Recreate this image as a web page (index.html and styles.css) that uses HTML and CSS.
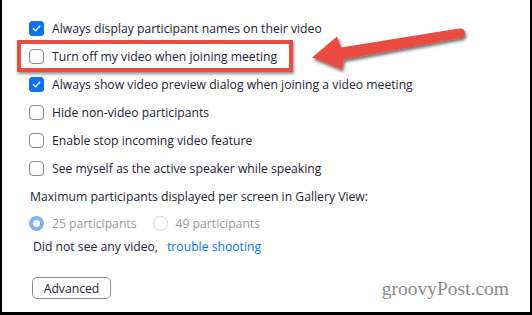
FILE: index.html
```html
<!DOCTYPE html>
<html>
<head>
<meta charset="utf-8">
<link rel="stylesheet" href="styles.css">
</head>
<body>
<div class="frame">
  <div class="panel">
    <div class="row"><span class="cb checked"><svg viewBox="0 0 15 15"><path d="M3.8 7.6 L6.4 10.1 L11.2 4.9" /></svg></span><span>Always display participant names on their video</span></div>
    <div class="row"><span class="cb"></span><span>Turn off my video when joining meeting</span></div>
    <div class="row"><span class="cb checked"><svg viewBox="0 0 15 15"><path d="M3.8 7.6 L6.4 10.1 L11.2 4.9" /></svg></span><span>Always show video preview dialog when joining a video meeting</span></div>
    <div class="row"><span class="cb"></span><span>Hide non-video participants</span></div>
    <div class="row"><span class="cb"></span><span>Enable stop incoming video feature</span></div>
    <div class="row"><span class="cb"></span><span>See myself as the active speaker while speaking</span></div>
    <div class="label">Maximum participants displayed per screen in Gallery View:</div>
    <div class="radios">
      <span class="radio on"></span><span class="dim">25 participants</span>
      <span class="radio second"></span><span class="dim">49 participants</span>
    </div>
    <div class="note">Did not see any video,<span class="link">trouble shooting</span></div>
    <div class="btn">Advanced</div>
    <div class="highlight"></div>
  </div>
  <svg class="arrow" width="532" height="100" viewBox="0 0 532 100">
    <defs>
      <filter id="sh" x="-10%" y="-30%" width="130%" height="180%">
        <feDropShadow dx="1.5" dy="2.5" stdDeviation="1.6" flood-color="#000" flood-opacity="0.55"/>
      </filter>
    </defs>
    <path filter="url(#sh)" fill="#ea4c3f" d="M312 57.5 L337 36.5 L341 47.5 L459 28.5 Q465 28 465 33 Q465 37.5 460.5 38 L343.5 59.5 L342 69.5 Z"/>
  </svg>
  <div class="wm">groovyPost.com</div>
</div>
</body>
</html>
```
FILE: styles.css
```css
html, body { margin: 0; padding: 0; background: #fff; }
.frame {
  position: relative;
  width: 532px; height: 315px;
  box-sizing: border-box;
  border-left: 2px solid #000;
  border-right: 2px solid #000;
  border-bottom: 3px solid #000;
  font-family: "Open Sans", "Noto Sans", sans-serif;
  font-size: 12.2px;
  color: #232333;
  overflow: hidden;
}
.panel { position: relative; padding: 14px 0 0 27px; }
.row { height: 28px; display: flex; align-items: center; gap: 8px; }
.cb {
  width: 15px; height: 15px; box-sizing: border-box;
  border: 1px solid #8a8a8a; border-radius: 4px; background: #fff; flex: none;
}
.cb.checked { background: #0e72ed; border-color: #0e72ed; border-radius: 3px; }
.cb svg { display: block; width: 13px; height: 13px; }
.cb svg path { fill: none; stroke: #fff; stroke-width: 1.6; stroke-linecap: round; stroke-linejoin: round; }
.label { height: 28px; display: flex; align-items: center; padding-left: 1px; }
.radios { height: 26px; display: flex; align-items: center; }
.radio {
  width: 15px; height: 15px; box-sizing: border-box; border-radius: 50%;
  border: 1px solid #d6d6d6; background: #fff; margin-right: 8px; flex: none;
}
.radio.on { border: 4px solid #7fb2ee; }
.radio.second { margin-left: 16px; }
.dim { color: #9a9a9a; }
.note { height: 20px; display: flex; align-items: center; padding-left: 4px; }
.link { color: #0e72ed; margin-left: 9px; }
.btn {
  margin: 21px 0 0 3px; width: 79px; height: 22px; box-sizing: border-box;
  border: 1px solid #8c8c8c; border-radius: 5px;
  display: flex; align-items: center; justify-content: center;
}
.highlight {
  position: absolute; left: 15px; top: 40px; width: 276px; height: 32px;
  box-sizing: border-box; border: 4px solid #ea4c3f;
  box-shadow: 1px 2px 3px rgba(0,0,0,0.45);
}
.arrow { position: absolute; left: -2px; top: 0; }
.wm {
  position: absolute; right: 21px; bottom: 12px;
  font-family: "Liberation Serif", serif; font-size: 19.5px; color: #8a8a8a;
}
```
